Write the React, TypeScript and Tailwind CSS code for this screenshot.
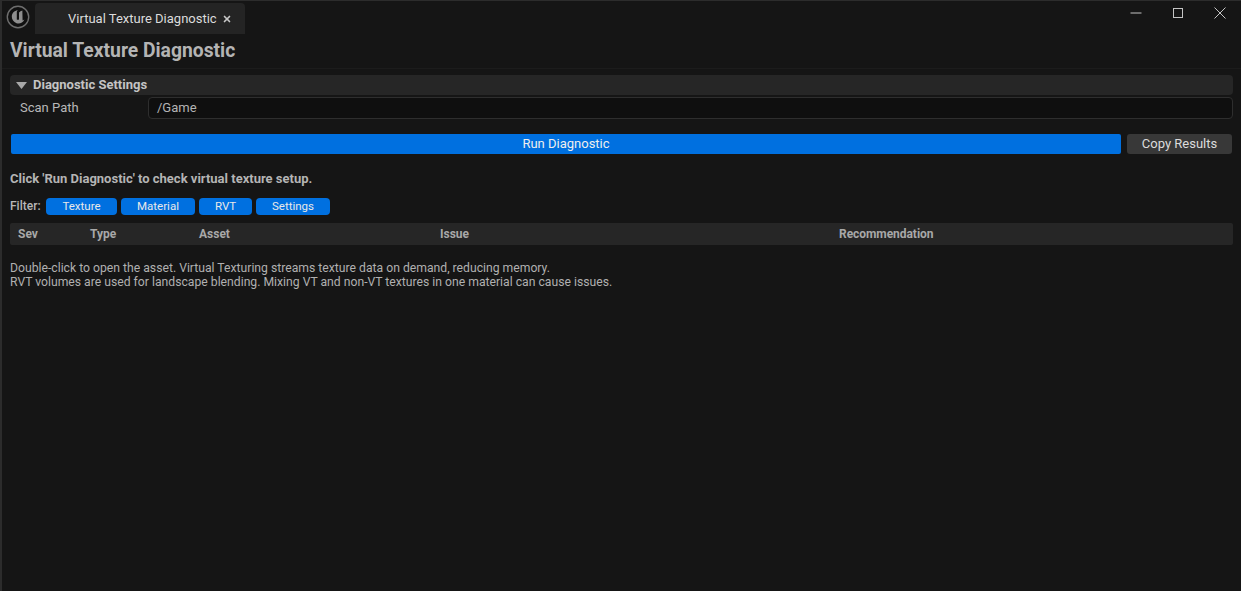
import { X } from "lucide-react";

const font = "font-['Roboto',sans-serif]";

const filters = [
	{ label: "Texture", width: "w-[71px]" },
	{ label: "Material", width: "w-[74px]" },
	{ label: "RVT", width: "w-[53px]" },
	{ label: "Settings", width: "w-[74px]" },
];

function UnrealLogo() {
	return (
		<svg width="24" height="24" viewBox="0 0 24 24" className="shrink-0">
			<circle cx="12" cy="12" r="10.700" fill="#101010" stroke="#6e6e6e" strokeWidth="1.400" />
			{/* Gothic U mark */}
			<path
				d="M11.800 5C8.200 5.800 5.800 8.300 5.800 11.600c0 3 1.800 5.400 4.700 6.600 3 .8 6.500-.2 7.900-3.700l-1.800 1.100-.2-8V5.600c-1.400.4-2.600 1.200-3.400 2v6.800c-.8.600-1.600.600-2.200 0V7c0-.8.400-1.500 1-2Z"
				fill="#8e8e8e"
			/>
		</svg>
	);
}

function WindowControls() {
	return (
		<div className="flex h-[20px] items-center text-[#c4c4c4]">
			<svg width="14" height="14" viewBox="0 0 14 14" className="mr-[28px]">
				<path d="M1.500 7h11" stroke="currentColor" strokeWidth="1" />
			</svg>
			<svg width="14" height="14" viewBox="0 0 14 14" className="mr-[28px]">
				<rect x="2.500" y="2.500" width="9" height="9" fill="none" stroke="currentColor" strokeWidth="1" />
			</svg>
			<svg width="14" height="14" viewBox="0 0 14 14" className="mr-[14px]">
				<path d="M1.500 1.500l11 11M12.500 1.500l-11 11" stroke="currentColor" strokeWidth="1" />
			</svg>
		</div>
	);
}

export default function App() {
	return (
		<div className={`${font} flex h-[591px] w-[1241px] flex-col overflow-hidden border-l-2 border-t border-[#2c2c2c] bg-[#151515] text-[#c0c0c0]`}>
			{/* Title bar */}
			<div className="flex h-[33px] shrink-0 items-start justify-between pl-[4px] pt-[2px]">
				<div className="flex items-start">
					<div className="mt-[2px]">
						<UnrealLogo />
					</div>
					<div className="ml-[5px] flex h-[31px] w-[210px] items-center rounded-t-[4px] bg-[#242424] pl-[33px]">
						<span className="text-[13px] text-[#dcdcdc]">Virtual Texture Diagnostic</span>
						<X className="ml-[5px] h-[10px] w-[10px] text-[#c8c8c8]" strokeWidth={4} />
					</div>
				</div>
				<WindowControls />
			</div>

			{/* Heading */}
			<div className="flex h-[35px] shrink-0 items-center border-b border-[#1c1c1c] pt-[1px] pl-[8px]">
				<h1 className="text-[19.300px] font-bold text-[#b4b4b4]">Virtual Texture Diagnostic</h1>
			</div>

			<div className="flex flex-1 flex-col pl-[8px] pr-[8px] pt-[6px]">
				{/* Settings */}
				<div className="flex h-[20px] items-center rounded-[4px] bg-[#262626]">
					<svg width="11" height="7" viewBox="0 0 11 7" className="ml-[6px]">
						<path d="M0 0h11L5.500 7Z" fill="#a8a8a8" />
					</svg>
					<span className="ml-[6px] text-[13px] font-bold text-[#c4c4c4]">Diagnostic Settings</span>
				</div>
				<div className="mt-[2px] flex h-[22px] items-center">
					<span className="w-[138px] pl-[10px] text-[13px] text-[#b8b8b8]">Scan Path</span>
					<div className="flex h-[22px] flex-1 items-center rounded-[4px] border border-[#2e2e2e] bg-[#0f0f0f] pl-[8px] pb-[1px] text-[13px] text-[#b4b4b4]">
						/Game
					</div>
				</div>

				{/* Actions */}
				<div className="mt-[15px] flex h-[20px] gap-[6px] px-[1px]">
					<button className="h-full flex-1 rounded-[2px] bg-[#0070e0] text-[13px] text-[#eeeeee]">
						Run Diagnostic
					</button>
					<button className="h-full w-[105px] rounded-[3px] bg-[#383838] text-[13px] text-[#dcdcdc]">
						Copy Results
					</button>
				</div>

				<p className="mt-[16px] text-[13px] leading-[17px] font-bold text-[#b4b4b4]">
					Click 'Run Diagnostic' to check virtual texture setup.
				</p>

				{/* Filters */}
				<div className="mt-[11px] flex h-[17px] items-center">
					<span className="w-[36px] pb-[1px] text-[12px] font-medium text-[#b8b8b8]">Filter:</span>
					<div className="flex gap-[4px]">
						{filters.map((filter) => (
							<button
								key={filter.label}
								className={`${filter.width} h-[17px] rounded-[4px] bg-[#0070e0] pb-[2px] text-[11.500px] text-[#e8e8e8]`}
							>
								{filter.label}
							</button>
						))}
					</div>
				</div>

				{/* Table header */}
				<div className="mt-[8px] grid h-[22px] grid-cols-[72px_109px_241px_399px_1fr] items-center rounded-[2px] bg-[#262626] pl-[8px] text-[12px] font-bold text-[#a8a8a8]">
					<span>Sev</span>
					<span>Type</span>
					<span>Asset</span>
					<span>Issue</span>
					<span className="tracking-[-0.05px]">Recommendation</span>
				</div>

				<p className="mt-[16px] text-[12.200px] leading-[14px] text-[#b0b0b0]">
					Double-click to open the asset. Virtual Texturing streams texture data on demand, reducing memory.
					<br />
					RVT volumes are used for landscape blending. Mixing VT and non-VT textures in one material can cause issues.
				</p>
			</div>
		</div>
	);
}
